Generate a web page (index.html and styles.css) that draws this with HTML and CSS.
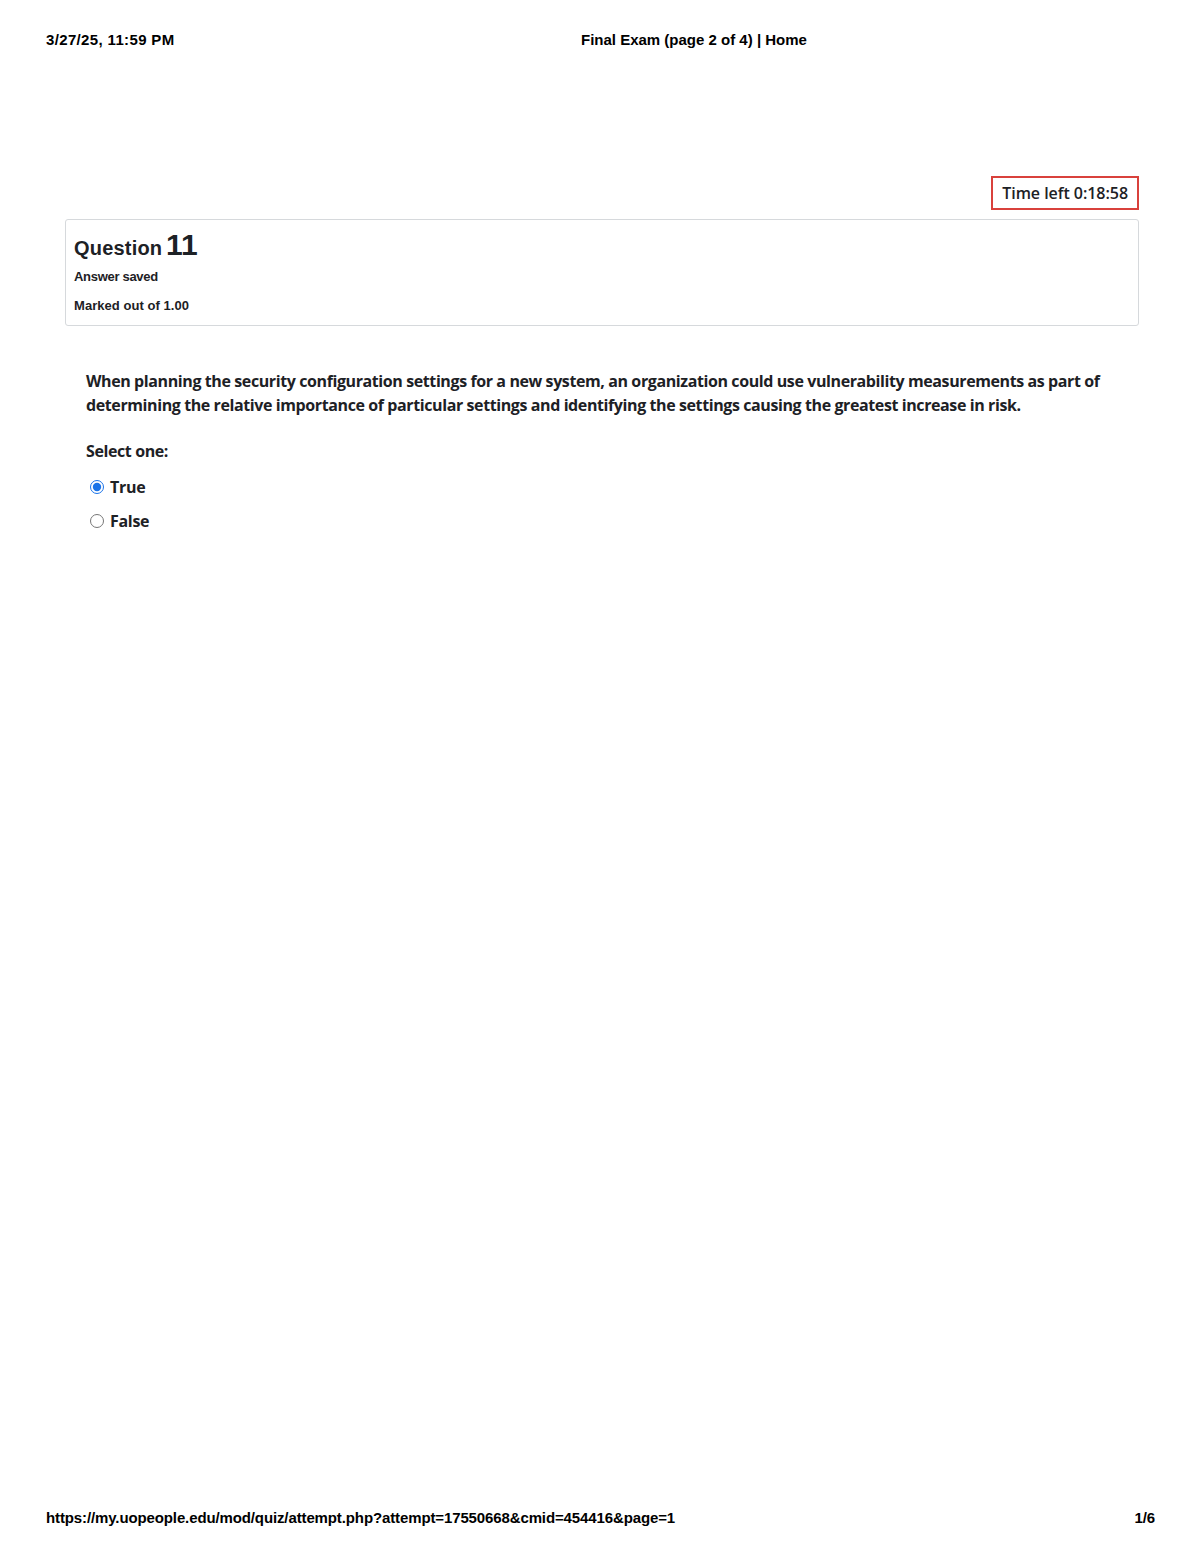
FILE: index.html
```html
<!DOCTYPE html>
<html lang="en">
<head>
<meta charset="utf-8">
<title>Final Exam (page 2 of 4) | Home</title>
<link rel="stylesheet" href="styles.css">
</head>
<body>
<div class="page">
  <header class="print-head">
    <span class="date">3/27/25, 11:59 PM</span>
    <span class="title">Final Exam (page 2 of 4) | Home</span>
  </header>
  <main class="content">
    <div class="timer-row">
      <div class="timer">Time left 0:18:58</div>
    </div>
    <div class="qinfo">
      <h3 class="qno">Question <span class="num">11</span></h3>
      <div class="state">Answer saved</div>
      <div class="grade">Marked out of 1.00</div>
    </div>
    <div class="formulation">
      <p class="qtext">When planning the security configuration settings for a new system, an organization could use vulnerability measurements as part of determining the relative importance of particular settings and identifying the settings causing the greatest increase in risk.</p>
      <div class="prompt">Select one:</div>
      <div class="answer">
        <label class="opt"><input type="radio" name="q11" checked> True</label>
        <label class="opt"><input type="radio" name="q11"> False</label>
      </div>
    </div>
  </main>
  <footer class="print-foot">
    <span class="url">https://my.uopeople.edu/mod/quiz/attempt.php?attempt=17550668&amp;cmid=454416&amp;page=1</span>
    <span class="pg">1/6</span>
  </footer>
</div>
</body>
</html>
```
FILE: styles.css
```css
html, body {
  margin: 0;
  padding: 0;
  background: #fff;
}
.page {
  width: 1200px;
  height: 1553px;
  display: flex;
  flex-direction: column;
  box-sizing: border-box;
}
.print-head, .print-foot {
  font-family: "Liberation Sans", Arial, sans-serif;
  font-size: 15px;
  font-weight: 700;
  color: #000;
  display: flex;
  align-items: center;
  padding-left: 46px;
  padding-right: 45px;
}
.print-head {
  height: 20px;
  margin-top: 29px;
}
.print-head .date {
  width: 535px;
  letter-spacing: 0.35px;
}
.print-head .title {
  letter-spacing: 0;
}
.print-foot {
  margin-top: auto;
  height: 20px;
  margin-bottom: 26px;
  justify-content: space-between;
  letter-spacing: -0.12px;
}
.content {
  font-family: "Open Sans", sans-serif;
  color: #1d2125;
  padding: 0 61px 0 65px;
  margin-top: 127px;
}
.timer-row {
  display: flex;
  justify-content: flex-end;
}
.timer {
  border: 2px solid #d9413c;
  font-size: 16px;
  font-weight: 600;
  letter-spacing: -0.05px;
  padding: 5px 9px 5px 9px;
  line-height: 20px;
  height: 20px;
}
.qinfo {
  margin-top: 9px;
  border: 1px solid #d6d9dc;
  border-radius: 3px;
  padding: 10px 8px 11px 8px;
}
.qno {
  font-family: "Liberation Sans", Arial, sans-serif;
  font-size: 20px;
  font-weight: 700;
  letter-spacing: 0.2px;
  margin: 0;
  line-height: 30px;
}
.qno .num {
  font-size: 30px;
  letter-spacing: 0;
  margin-left: -2px;
}
.state, .grade {
  font-family: "Liberation Sans", Arial, sans-serif;
  font-size: 13px;
  font-weight: 700;
  line-height: 16px;
}
.state {
  margin-top: 6px;
  letter-spacing: -0.3px;
}
.grade {
  margin-top: 13px;
  letter-spacing: 0.05px;
}
.formulation {
  padding: 0 20px 0 21px;
  margin-top: 43px;
}
.qtext {
  margin: 0;
  font-size: 16px;
  font-weight: 700;
  letter-spacing: -0.4px;
  line-height: 24px;
}
.prompt {
  margin-top: 22px;
  font-size: 16px;
  font-weight: 700;
  letter-spacing: -0.4px;
  line-height: 24px;
}
.answer {
  margin-top: 12px;
  display: flex;
  flex-direction: column;
  gap: 10px;
}
.opt {
  display: flex;
  align-items: center;
  font-size: 16px;
  font-weight: 700;
  letter-spacing: -0.3px;
  line-height: 24px;
  gap: 6px;
}
.opt input {
  margin: 0 0 0 4px;
  width: 14px;
  height: 14px;
  accent-color: #1a73e8;
}
```
